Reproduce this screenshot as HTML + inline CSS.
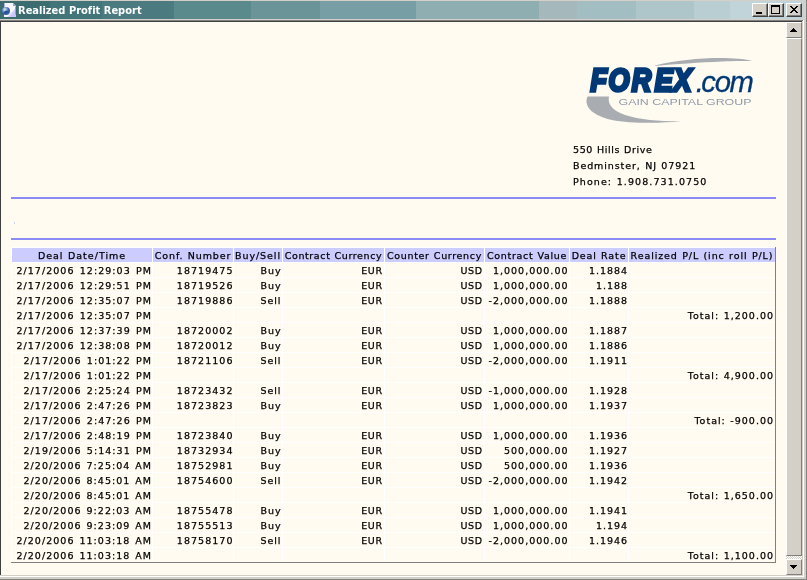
<!DOCTYPE html>
<html><head><meta charset="utf-8"><title>Realized Profit Report</title>
<style>
html,body{margin:0;padding:0}
body{width:807px;height:580px;overflow:hidden;background:#d4d0c8;position:relative;font-family:"DejaVu Sans","Liberation Sans",sans-serif;font-size:11px;color:#000}
.abs{position:absolute}
#tb{left:0;top:1px;width:804px;height:18px;background:linear-gradient(to right,#3a6c70 0px,#3a6c70 50px,#41757a 50px,#41757a 102px,#4b7b81 102px,#4b7b81 174px,#5a8a8c 174px,#5a8a8c 251px,#6a9497 251px,#6a9497 320px,#789ea5 320px,#789ea5 416px,#8eaeb2 416px,#8eaeb2 539px,#a5b8bb 539px,#a5b8bb 577px,#a3bec2 577px,#a3bec2 636px,#aec6ca 636px,#aec6ca 694px,#b8ced3 694px,#b8ced3 730px,#c0d4d9 730px,#c0d4d9 804px)}
#title{will-change:transform;left:18.4px;top:4px;letter-spacing:0.01px;color:#fff;font-weight:bold;font-size:11px;line-height:13px;white-space:nowrap;font-family:"DejaVu Sans Condensed","DejaVu Sans","Liberation Sans",sans-serif}
.btn{top:3px;width:16px;height:14px;background:#d4d0c8;box-sizing:border-box;border:1px solid;border-color:#fff #404040 #404040 #fff;box-shadow:inset -1px -1px 0 #808080}
#content{left:1px;top:22px;width:785px;height:553px;background:#fffbf0}
#sb{left:786px;top:22px;width:16px;height:553px;background:repeating-conic-gradient(#fff 0 25%,#d4d0c8 0 50%) 0 0/2px 2px}
.face{background:#d4d0c8;box-sizing:border-box;border-left:1px solid #fff;border-top:1px solid #fff;border-right:1px solid #808080;border-bottom:1px solid #808080}
.hr{left:11px;width:765px;height:2px;background:#8b8bf8}
.addr{will-change:transform;left:574px;white-space:nowrap;line-height:16px}
table.t{will-change:transform;position:absolute;left:11px;top:247px;width:765px;table-layout:fixed;border-collapse:separate;border-spacing:1px;background:#fff}
table.t td,table.t th{height:14px;padding:0;background:#fffbf0;font-weight:normal;font-size:9.5px;line-height:14px;white-space:nowrap;text-align:right;overflow:visible}
table.t th{background:#ccccff;text-align:center}
table.t span{position:relative;top:1px;-webkit-text-stroke:0.25px #000}
.addr span{-webkit-text-stroke:0.25px #000}
th.c0 span{letter-spacing:0.996px;word-spacing:0.500px;}
th.c1 span{letter-spacing:0.886px;word-spacing:0.500px;}
th.c2 span{letter-spacing:0.950px;word-spacing:0.500px;}
th.c3 span{letter-spacing:0.605px;word-spacing:0.500px;}
th.c4 span{letter-spacing:0.666px;word-spacing:0.500px;}
th.c5 span{letter-spacing:0.673px;word-spacing:0.500px;}
th.c6 span{letter-spacing:0.862px;word-spacing:0.500px;}
th.c7 span{letter-spacing:0.896px;word-spacing:0.500px;}
td.c0 span{letter-spacing:1.040px;word-spacing:1.220px;margin-right:-0.040px;}
td.c1 span{letter-spacing:1.050px;word-spacing:0.500px;margin-right:-0.550px;}
td.c2 span{letter-spacing:0.950px;word-spacing:0.500px;margin-right:0.550px;}
td.c3 span{letter-spacing:0.600px;word-spacing:0.500px;margin-right:1.400px;}
td.c4 span{letter-spacing:0.600px;word-spacing:0.500px;margin-right:1.400px;}
td.c5 span{letter-spacing:1.011px;word-spacing:0.500px;margin-right:0.489px;}
td.c6 span{letter-spacing:0.950px;word-spacing:0.500px;margin-right:0.050px;}
td.c7 span{letter-spacing:1.000px;word-spacing:0.500px;margin-right:1.000px;}
.a1{letter-spacing:0.590px;word-spacing:0.500px;}
.a2{letter-spacing:0.908px;word-spacing:0.500px;}
.a3{letter-spacing:1.085px;word-spacing:0.500px;}
td.c0 span.am{word-spacing:0.820px}
.fx{font-family:'Liberation Sans',sans-serif;font-weight:bold;font-style:italic;font-size:29px;fill:#003876;stroke:#003876;stroke-width:3.0px;stroke-linejoin:miter}
.cm{font-family:'Liberation Sans',sans-serif;font-style:italic;font-size:30.8px;fill:#003876;stroke:#003876;stroke-width:0.3px}
</style></head><body>
<div class="abs" id="tb"></div>
<svg class="abs" style="left:1px;top:2px" width="16" height="16" viewBox="0 0 16 16">
 <defs><radialGradient id="gl" cx="0.35" cy="0.3" r="0.75"><stop offset="0" stop-color="#e4eefa"/><stop offset="0.35" stop-color="#7c9ccc"/><stop offset="0.7" stop-color="#2e5aa2"/><stop offset="1" stop-color="#3c68ac"/></radialGradient></defs>
 <path d="M3 1 L12 1 L15 4 L15 15 L3 15 Z" fill="#f6f4ff"/>
 <path d="M6.5 15 L15 6 L15 15 Z" fill="#d6d0ff"/>
 <path d="M9 15 L15 9 L15 15 Z" fill="#cbc4ff"/>
 <rect x="3" y="1" width="1" height="5" fill="#b4acff"/>
 <path d="M12 1 L12 4 L15 4 Z" fill="#8ea2d2"/>
 <rect x="14" y="4.5" width="1" height="8" fill="#9a98ee"/>
 <circle cx="5" cy="9" r="4" fill="url(#gl)"/>
 <path d="M3 10.2 Q5 8.2 7.6 9.2 Q6 11.6 3.6 11.4 Z" fill="#24509a"/>
</svg>
<div class="abs" id="title">Realized Profit Report</div>
<div class="abs btn" style="left:752px"><div class="abs" style="left:3px;top:8px;width:6px;height:2px;background:#000"></div></div>
<div class="abs btn" style="left:768px"><div class="abs" style="left:2px;top:1px;width:9px;height:9px;box-sizing:border-box;border:1px solid #000;border-top-width:2px"></div></div>
<div class="abs btn" style="left:786px"><svg class="abs" style="left:3px;top:2px" width="8" height="7" viewBox="0 0 8 7"><path shape-rendering="crispEdges" d="M0 0h2v1h-2zM6 0h2v1h-2zM1 1h2v1h-2zM5 1h2v1h-2zM2 2h4v1h-4zM3 3h2v1h-2zM2 4h4v1h-4zM1 5h2v1h-2zM5 5h2v1h-2zM0 6h2v1h-2zM6 6h2v1h-2z" fill="#000"/></svg></div>
<!-- frame lines -->
<div class="abs" style="left:0;top:20px;width:804px;height:1px;background:#808080"></div>
<div class="abs" style="left:0;top:21px;width:802px;height:1px;background:#404040"></div>
<div class="abs" style="left:0;top:21px;width:1px;height:554px;background:#404040"></div>
<div class="abs" style="left:803px;top:20px;width:1px;height:557px;background:#fff"></div>
<div class="abs" style="left:0;top:576px;width:804px;height:1px;background:#fff"></div>
<div class="abs" style="left:806px;top:0;width:1px;height:580px;background:#808080"></div>
<div class="abs" style="left:0;top:579px;width:807px;height:1px;background:#808080"></div>
<div class="abs" id="content"></div>
<!-- scrollbar -->
<div class="abs" id="sb"></div>
<div class="abs face" style="left:786px;top:22px;width:16px;height:16px"><svg class="abs" style="left:3px;top:5px" width="7" height="4" viewBox="0 0 7 4"><path d="M3 0h1v1h1v1h1v1h1v1H0V3h1V2h1V1h1Z" fill="#000"/></svg></div>
<div class="abs face" style="left:786px;top:38px;width:16px;height:518px"></div>
<div class="abs face" style="left:786px;top:559px;width:16px;height:16px"><svg class="abs" style="left:3px;top:5px" width="7" height="4" viewBox="0 0 7 4"><path d="M0 0h7v1H6v1H5v1H4v1H3V3H2V2H1V1H0Z" fill="#000"/></svg></div>
<!-- logo -->
<svg class="abs" style="left:580px;top:50px;will-change:transform" width="190" height="80" viewBox="580 50 190 80">
 <path d="M655 65.5 C675 60 705 57.5 725 58 C738 58.3 748 59.5 752 61 C745 61 735 61 722 61.5 C700 62.5 675 64 655 66 Z" fill="#a9acb0"/>
 <path d="M587.5 96.5 L609 96.5 C607.5 103 611 110 625 115 C640 120 662 121.5 681 121.3 C660 123.5 630 123.5 612 120 C594 116 583 107 587.5 96.5 Z" fill="#a9acb0"/>
 <text transform="translate(0,91.33) scale(0.930,1.108)" x="635.01 654.27 679.23 703.93 724.17" class="fx">FOREX</text>
 <text transform="translate(0,92.15) scale(0.950,0.940)" x="732.47 738.07 752.29 768.01" class="cm">.com</text>
 <text x="618.5" y="104.7" font-family="Liberation Sans,sans-serif" font-size="8.2" fill="#8f9aab" textLength="133" lengthAdjust="spacingAndGlyphs">GAIN CAPITAL GROUP</text>
</svg>
<div class="abs addr" style="top:142px;left:573px;font-size:9.5px"><span class="a1">550 Hills Drive</span><br><span class="a2">Bedminster, NJ 07921</span><br><span class="a3">Phone: 1.908.731.0750</span></div>
<div class="abs hr" style="top:197px"></div>
<div class="abs hr" style="top:238px"></div>
<div class="abs" style="left:14px;top:222px;width:1px;height:2px;background:#c8d0e8"></div>
<table class="t" cellspacing="1" cellpadding="0"><colgroup><col style="width:140px"><col style="width:80px"><col style="width:48px"><col style="width:101px"><col style="width:99px"><col style="width:84px"><col style="width:58px"><col style="width:146px"></colgroup>
<tr class="h"><th class="c0"><span>Deal Date/Time</span></th><th class="c1"><span>Conf. Number</span></th><th class="c2"><span>Buy/Sell</span></th><th class="c3"><span>Contract Currency</span></th><th class="c4"><span>Counter Currency</span></th><th class="c5"><span>Contract Value</span></th><th class="c6"><span>Deal Rate</span></th><th class="c7"><span>Realized P/L (inc roll P/L)</span></th></tr>
<tr><td class="c0"><span>2/17/2006 12:29:03 PM</span></td><td class="c1"><span>18719475</span></td><td class="c2"><span>Buy</span></td><td class="c3"><span>EUR</span></td><td class="c4"><span>USD</span></td><td class="c5"><span>1,000,000.00</span></td><td class="c6"><span>1.1884</span></td><td class="c7"></td></tr>
<tr><td class="c0"><span>2/17/2006 12:29:51 PM</span></td><td class="c1"><span>18719526</span></td><td class="c2"><span>Buy</span></td><td class="c3"><span>EUR</span></td><td class="c4"><span>USD</span></td><td class="c5"><span>1,000,000.00</span></td><td class="c6"><span>1.188</span></td><td class="c7"></td></tr>
<tr><td class="c0"><span>2/17/2006 12:35:07 PM</span></td><td class="c1"><span>18719886</span></td><td class="c2"><span>Sell</span></td><td class="c3"><span>EUR</span></td><td class="c4"><span>USD</span></td><td class="c5"><span>-2,000,000.00</span></td><td class="c6"><span>1.1888</span></td><td class="c7"></td></tr>
<tr><td class="c0"><span>2/17/2006 12:35:07 PM</span></td><td class="c1"></td><td class="c2"></td><td class="c3"></td><td class="c4"></td><td class="c5"></td><td class="c6"></td><td class="c7"><span>Total: 1,200.00</span></td></tr>
<tr><td class="c0"><span>2/17/2006 12:37:39 PM</span></td><td class="c1"><span>18720002</span></td><td class="c2"><span>Buy</span></td><td class="c3"><span>EUR</span></td><td class="c4"><span>USD</span></td><td class="c5"><span>1,000,000.00</span></td><td class="c6"><span>1.1887</span></td><td class="c7"></td></tr>
<tr><td class="c0"><span>2/17/2006 12:38:08 PM</span></td><td class="c1"><span>18720012</span></td><td class="c2"><span>Buy</span></td><td class="c3"><span>EUR</span></td><td class="c4"><span>USD</span></td><td class="c5"><span>1,000,000.00</span></td><td class="c6"><span>1.1886</span></td><td class="c7"></td></tr>
<tr><td class="c0"><span>2/17/2006 1:01:22 PM</span></td><td class="c1"><span>18721106</span></td><td class="c2"><span>Sell</span></td><td class="c3"><span>EUR</span></td><td class="c4"><span>USD</span></td><td class="c5"><span>-2,000,000.00</span></td><td class="c6"><span>1.1911</span></td><td class="c7"></td></tr>
<tr><td class="c0"><span>2/17/2006 1:01:22 PM</span></td><td class="c1"></td><td class="c2"></td><td class="c3"></td><td class="c4"></td><td class="c5"></td><td class="c6"></td><td class="c7"><span>Total: 4,900.00</span></td></tr>
<tr><td class="c0"><span>2/17/2006 2:25:24 PM</span></td><td class="c1"><span>18723432</span></td><td class="c2"><span>Sell</span></td><td class="c3"><span>EUR</span></td><td class="c4"><span>USD</span></td><td class="c5"><span>-1,000,000.00</span></td><td class="c6"><span>1.1928</span></td><td class="c7"></td></tr>
<tr><td class="c0"><span>2/17/2006 2:47:26 PM</span></td><td class="c1"><span>18723823</span></td><td class="c2"><span>Buy</span></td><td class="c3"><span>EUR</span></td><td class="c4"><span>USD</span></td><td class="c5"><span>1,000,000.00</span></td><td class="c6"><span>1.1937</span></td><td class="c7"></td></tr>
<tr><td class="c0"><span>2/17/2006 2:47:26 PM</span></td><td class="c1"></td><td class="c2"></td><td class="c3"></td><td class="c4"></td><td class="c5"></td><td class="c6"></td><td class="c7"><span>Total: -900.00</span></td></tr>
<tr><td class="c0"><span>2/17/2006 2:48:19 PM</span></td><td class="c1"><span>18723840</span></td><td class="c2"><span>Buy</span></td><td class="c3"><span>EUR</span></td><td class="c4"><span>USD</span></td><td class="c5"><span>1,000,000.00</span></td><td class="c6"><span>1.1936</span></td><td class="c7"></td></tr>
<tr><td class="c0"><span>2/19/2006 5:14:31 PM</span></td><td class="c1"><span>18732934</span></td><td class="c2"><span>Buy</span></td><td class="c3"><span>EUR</span></td><td class="c4"><span>USD</span></td><td class="c5"><span>500,000.00</span></td><td class="c6"><span>1.1927</span></td><td class="c7"></td></tr>
<tr><td class="c0"><span class="am">2/20/2006 7:25:04 AM</span></td><td class="c1"><span>18752981</span></td><td class="c2"><span>Buy</span></td><td class="c3"><span>EUR</span></td><td class="c4"><span>USD</span></td><td class="c5"><span>500,000.00</span></td><td class="c6"><span>1.1936</span></td><td class="c7"></td></tr>
<tr><td class="c0"><span class="am">2/20/2006 8:45:01 AM</span></td><td class="c1"><span>18754600</span></td><td class="c2"><span>Sell</span></td><td class="c3"><span>EUR</span></td><td class="c4"><span>USD</span></td><td class="c5"><span>-2,000,000.00</span></td><td class="c6"><span>1.1942</span></td><td class="c7"></td></tr>
<tr><td class="c0"><span class="am">2/20/2006 8:45:01 AM</span></td><td class="c1"></td><td class="c2"></td><td class="c3"></td><td class="c4"></td><td class="c5"></td><td class="c6"></td><td class="c7"><span>Total: 1,650.00</span></td></tr>
<tr><td class="c0"><span class="am">2/20/2006 9:22:03 AM</span></td><td class="c1"><span>18755478</span></td><td class="c2"><span>Buy</span></td><td class="c3"><span>EUR</span></td><td class="c4"><span>USD</span></td><td class="c5"><span>1,000,000.00</span></td><td class="c6"><span>1.1941</span></td><td class="c7"></td></tr>
<tr><td class="c0"><span class="am">2/20/2006 9:23:09 AM</span></td><td class="c1"><span>18755513</span></td><td class="c2"><span>Buy</span></td><td class="c3"><span>EUR</span></td><td class="c4"><span>USD</span></td><td class="c5"><span>1,000,000.00</span></td><td class="c6"><span>1.194</span></td><td class="c7"></td></tr>
<tr><td class="c0"><span class="am">2/20/2006 11:03:18 AM</span></td><td class="c1"><span>18758170</span></td><td class="c2"><span>Sell</span></td><td class="c3"><span>EUR</span></td><td class="c4"><span>USD</span></td><td class="c5"><span>-2,000,000.00</span></td><td class="c6"><span>1.1946</span></td><td class="c7"></td></tr>
<tr><td class="c0"><span class="am">2/20/2006 11:03:18 AM</span></td><td class="c1"></td><td class="c2"></td><td class="c3"></td><td class="c4"></td><td class="c5"></td><td class="c6"></td><td class="c7"><span>Total: 1,100.00</span></td></tr>
</table>
<div class="abs" style="left:775px;top:247px;width:1px;height:316px;background:#808080"></div>
<div class="abs" style="left:11px;top:562px;width:765px;height:1px;background:#808080"></div>
</body></html>
